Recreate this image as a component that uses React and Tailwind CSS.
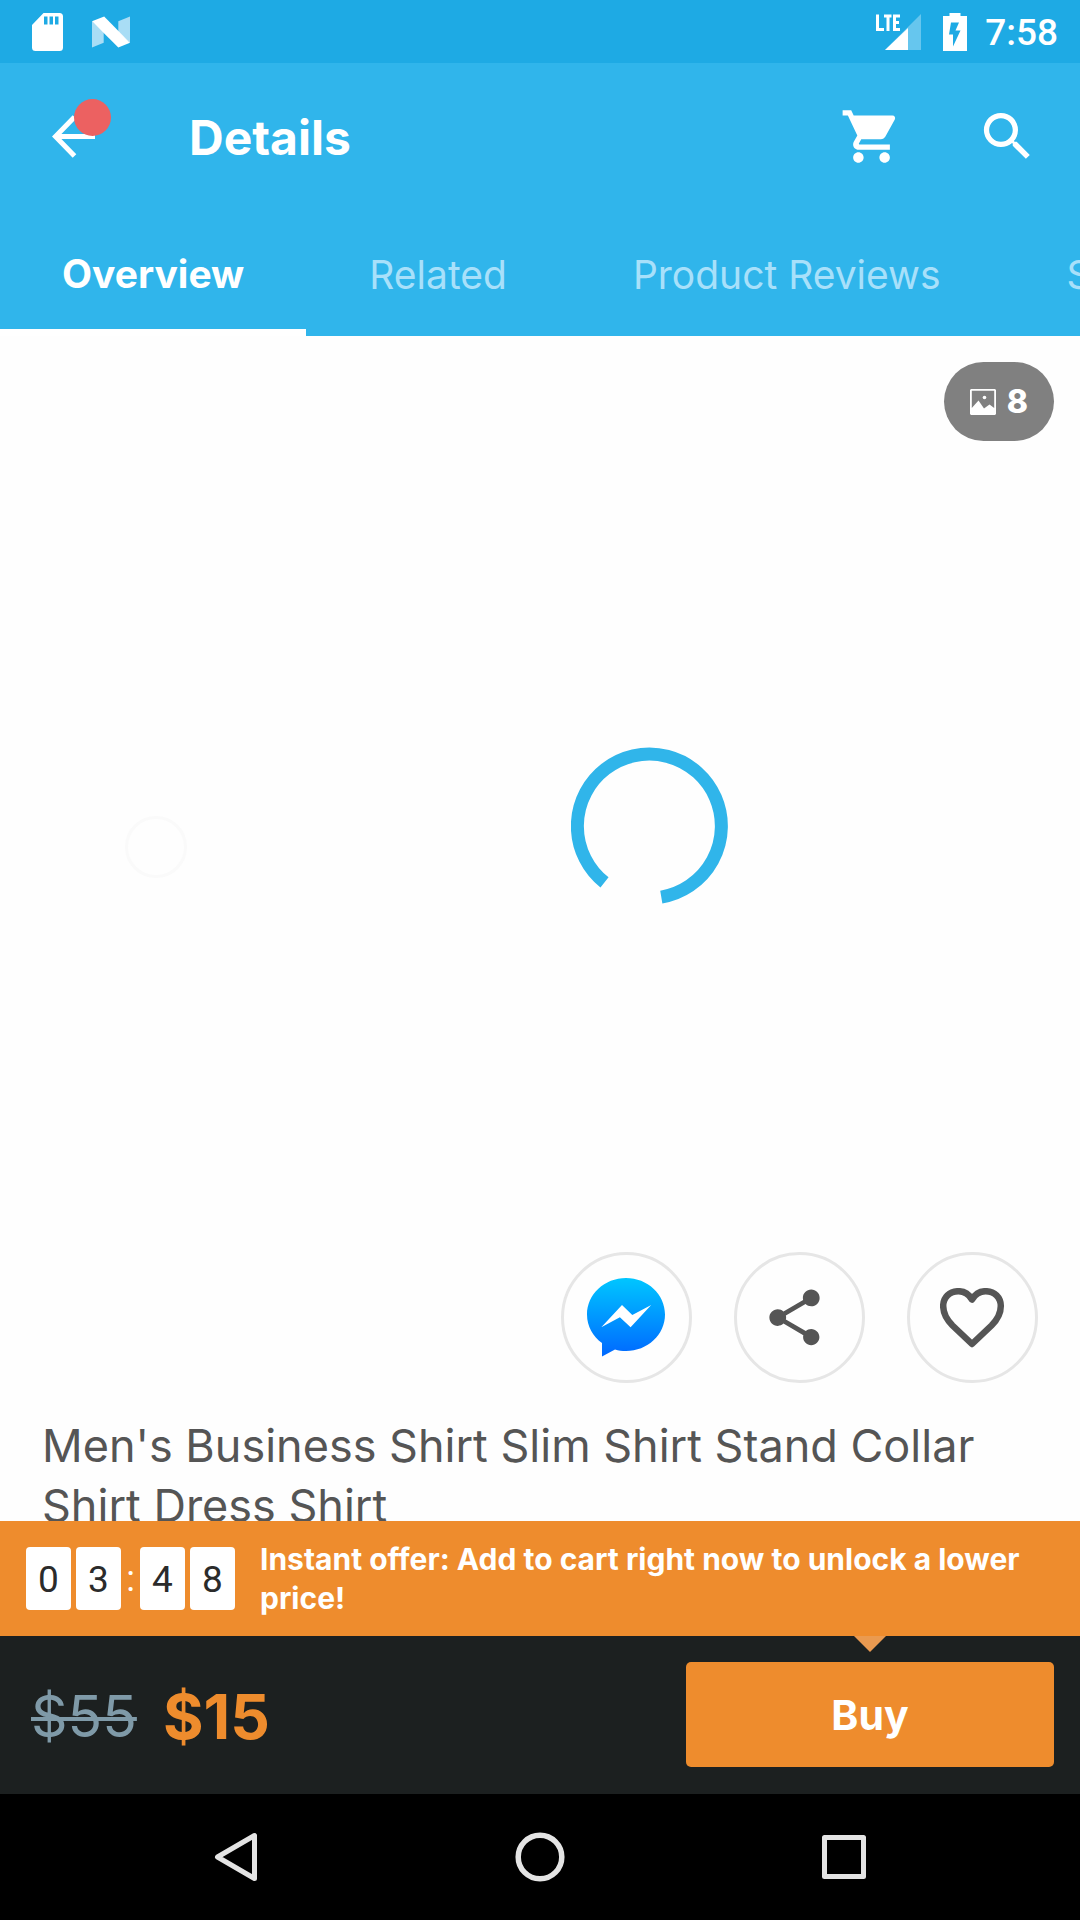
import { MdShoppingCart, MdSearch, MdShare } from "react-icons/md";

function StatusBar() {
  return (
    <div className="flex h-[63px] shrink-0 items-center justify-between bg-[#1eaae4] pr-[22px] pl-8">
      <div className="flex items-center gap-7">
        <svg width="32" height="38" viewBox="0 0 32 38" fill="#fff" aria-label="SD card" role="img">
          <path
            fillRule="evenodd"
            d="M11.5 0H27.500A3.500 3.500 0 0 1 31 3.500V34.500A3.500 3.500 0 0 1 27.500 38H3.500A3.500 3.500 0 0 1 0 34.500V12ZM12 3.500V11.500H15.500V3.500ZM17.500 3.500V11.500H21V3.500ZM23 3.500V11.500H26.500V3.500Z"
          />
        </svg>
        <svg width="38" height="32" viewBox="0 0 39 32" aria-label="Android N" role="img">
          <path d="M0 5L12 16V27L0 32Z" fill="#a9ddf5" />
          <path d="M27 5L39 0V27L27 16Z" fill="#a9ddf5" />
          <path d="M0 5L12.500 0L39 27L27 32Z" fill="#fff" />
        </svg>
      </div>
      <div className="flex items-center">
        <svg width="46" height="38" viewBox="0 0 46 38" aria-label="LTE signal" role="img">
          <path d="M1.500 1.500V16.500H8M8 3H15.500M12 3V18M18.500 1.500V18M18 3H24M18 9.500H23M18 16.500H24" fill="none" stroke="#fff" strokeWidth="3" />
          <path d="M9 37L45 1V37Z" fill="#66c6ee" />
          <path d="M9 37L32 15V37Z" fill="#fff" />
        </svg>
        <svg className="ml-[21px]" width="24" height="38" viewBox="0 0 24 38" aria-label="Battery charging" role="img">
          <path
            fillRule="evenodd"
            fill="#fff"
            d="M6.500 0H17.500V3H24V38H0V3H6.500ZM8 9.500L6 21.500H10V33.500L17.500 17.500H12.500L16 9.500Z"
          />
        </svg>
        <time className="ml-[18px] pt-0.5 font-[Roboto] text-[37px] leading-[46px] font-medium text-white">7:58</time>
      </div>
    </div>
  );
}

function Toolbar() {
  return (
    <div className="flex h-[147px] items-center pr-[41px] pl-[52px]">
      <button type="button" aria-label="Back" className="relative">
        <svg width="43" height="43" viewBox="0 0 43 43" fill="none" stroke="#fff" strokeWidth="5">
          <path d="M22.500 2L3.500 21.500L22.500 41M3.500 21.500H43" />
        </svg>
        <span className="absolute -top-4 left-[22px] size-[37px] rounded-full bg-[#ec6161]" />
      </button>
      <h1 className="ml-[94px] flex-1 pt-0.5 text-[48px] leading-[60px] font-bold text-white">Details</h1>
      <button type="button" aria-label="Cart" className="mr-[73px]">
        <MdShoppingCart size={63} color="#fff" />
      </button>
      <button type="button" aria-label="Search">
        <MdSearch size={63} color="#fff" />
      </button>
    </div>
  );
}

function Tabs() {
  return (
    <nav className="flex h-[126px] overflow-hidden text-[39px] whitespace-nowrap text-[#a8e0fa]">
      <a href="#overview" aria-current="page" className="flex shrink-0 items-center border-b-[7px] border-white px-[62px] pt-2.5 font-bold text-white">
        Overview
      </a>
      <a href="#related" className="flex shrink-0 items-center px-[63px] pt-1">Related</a>
      <a href="#reviews" className="flex shrink-0 items-center px-[63px] pt-1">Product Reviews</a>
      <a href="#shipping" className="flex shrink-0 items-center px-[63px] pt-1">Shipping Info</a>
    </nav>
  );
}

function ImageCount() {
  return (
    <button type="button" aria-label="8 photos" className="flex h-[79px] items-center gap-[11px] rounded-full bg-[#808080] px-[26px] text-[32px] font-extrabold text-white">
      <svg width="26" height="26" viewBox="0 0 26 26">
        <path fillRule="evenodd" fill="#fff" d="M1 0H25L26 1V25L25 26H1L0 25V1ZM1.800 1.800V19L8.500 11.500L14 19.500L19.500 15.500L24.200 19V1.800Z" />
        <circle cx="14.500" cy="8.500" r="1.800" fill="#fff" />
      </svg>
      8
    </button>
  );
}

function Loaders() {
  return (
    <div className="grid h-[811px] shrink-0 grid-cols-[312fr_676fr_92fr] items-center justify-items-center">
      <span className="size-[62px] rounded-full border-[3px] border-[#fafafa]" />
      <svg className="mb-[42px]" width="158" height="158" viewBox="0 0 158 158" role="progressbar" aria-label="Loading">
        <path d="M33.500 135.400A72 72 0 1 1 90.300 150.100" fill="none" stroke="#30b5ea" strokeWidth="13" />
      </svg>
    </div>
  );
}

function RoundButton({ label, children }) {
  return (
    <button type="button" aria-label={label} className="flex size-[131px] items-center justify-center rounded-full border-[3px] border-[#e6e6e6] bg-[#fefefe]">
      {children}
    </button>
  );
}

function Actions() {
  return (
    <div className="flex shrink-0 justify-end gap-[42px] pr-[42px]">
      <RoundButton label="Send in Messenger">
        <svg width="80" height="80" viewBox="1 1 80 80">
          <defs>
            <linearGradient id="messenger" x1="0" y1="0" x2="0" y2="1">
              <stop offset="0" stopColor="#00c6ff" />
              <stop offset="1" stopColor="#0068ff" />
            </linearGradient>
          </defs>
          <path d="M40 1C61.500 1 79 17.300 79 37.500S61.500 74 40 74C36 74 32.500 73.500 29 72.400L16 79.500V66C7 59.500 1 49.500 1 37.500C1 17.300 18.500 1 40 1Z" fill="url(#messenger)" />
          <path d="M15.300 50.300L36 28L46.300 38L65.200 28L44.600 50.300L33.900 40.300Z" fill="#fff" />
        </svg>
      </RoundButton>
      <RoundButton label="Share">
        <MdShare size={67} color="#555" className="mr-2.5" />
      </RoundButton>
      <RoundButton label="Add to wishlist">
        <svg width="66" height="60" viewBox="1 1 66 60" fill="none" stroke="#555" strokeWidth="6.500" strokeLinejoin="round">
          <path d="M33 12.500C29.500 6.500 25 4.200 19.500 4.200C10.500 4.200 4.200 10.500 4.200 19C4.200 27 8 33 13.500 38.500L33 57L52.500 38.500C58 33 61.800 27 61.800 19C61.800 10.500 55.500 4.200 46.500 4.200C41 4.200 36.500 6.500 33 12.500Z" />
        </svg>
      </RoundButton>
    </div>
  );
}

function Digit({ children }) {
  return (
    <span className="flex h-[63px] w-[45px] items-center justify-center rounded-[4px] bg-white pt-0.5 text-[37px] text-[#2b2b2b]">{children}</span>
  );
}

function OfferBar() {
  return (
    <div className="flex h-[115px] shrink-0 items-center bg-[#ee8c2d] px-[26px]">
      <div className="flex items-center gap-[5px] font-[Roboto]">
        <Digit>0</Digit>
        <Digit>3</Digit>
        <span className="w-[9px] text-center text-[36px] text-white">:</span>
        <Digit>4</Digit>
        <Digit>8</Digit>
      </div>
      <p className="ml-[25px] flex-1 text-[30px] leading-[39px] font-bold text-white">
        Instant offer: Add to cart right now to unlock a lower price!
      </p>
    </div>
  );
}

function BuyBar() {
  return (
    <div className="flex h-[158px] shrink-0 items-center justify-between bg-[#1c2020] pr-[26px] pb-0.5 pl-[31px]">
      <div className="flex items-center gap-[26px] pt-1.5 leading-[72px]">
        <s className="text-[57px] text-[#7f9aa8] decoration-[4px]">$55</s>
        <strong className="text-[62px] font-bold text-[#ee8c2d]">$15</strong>
      </div>
      <div className="relative w-[368px]">
        <svg className="absolute -top-[26px] left-1/2 -translate-x-1/2" width="32" height="16" viewBox="0 0 32 16" aria-hidden="true">
          <path d="M0 0H32L16 16Z" fill="#ea9a50" />
        </svg>
        <button type="button" className="h-[105px] w-full rounded-[5px] bg-[#ee8c2d] pt-1 text-[41px] font-bold text-white">
          Buy
        </button>
      </div>
    </div>
  );
}

function SystemNav() {
  return (
    <div className="flex h-[126px] shrink-0 items-center justify-between bg-black px-[214px]">
      <button type="button" aria-label="Back">
        <svg width="44" height="50" viewBox="0 0 44 50" fill="none" stroke="#e4e4e4" strokeWidth="5" strokeLinejoin="round">
          <path d="M40.500 3.500V46.500L3.500 25Z" />
        </svg>
      </button>
      <button type="button" aria-label="Home">
        <svg width="50" height="50" viewBox="0 0 50 50" fill="none" stroke="#e4e4e4" strokeWidth="5.500">
          <circle cx="25" cy="25" r="21.800" />
        </svg>
      </button>
      <button type="button" aria-label="Recent apps">
        <svg width="44" height="44" viewBox="0 0 44 44" fill="none" stroke="#e4e4e4" strokeWidth="5" strokeLinejoin="round">
          <rect x="2.500" y="2.500" width="39" height="39" />
        </svg>
      </button>
    </div>
  );
}

export default function App() {
  return (
    <div className="flex h-screen flex-col overflow-hidden bg-[#fefefe] font-[Inter,sans-serif]">
      <StatusBar />
      <header className="shrink-0 bg-[#30b5eb]">
        <Toolbar />
        <Tabs />
      </header>
      <main className="flex min-h-0 flex-1 flex-col overflow-hidden">
        <div className="flex shrink-0 justify-end pt-[26px] pr-[26px]">
          <ImageCount />
        </div>
        <Loaders />
        <Actions />
        <h2 className="mt-[33px] shrink-0 px-[42px] text-[45px] leading-[60px] text-[#555]">
          Men's Business Shirt Slim Shirt Stand Collar Shirt Dress Shirt
        </h2>
      </main>
      <OfferBar />
      <BuyBar />
      <SystemNav />
    </div>
  );
}
